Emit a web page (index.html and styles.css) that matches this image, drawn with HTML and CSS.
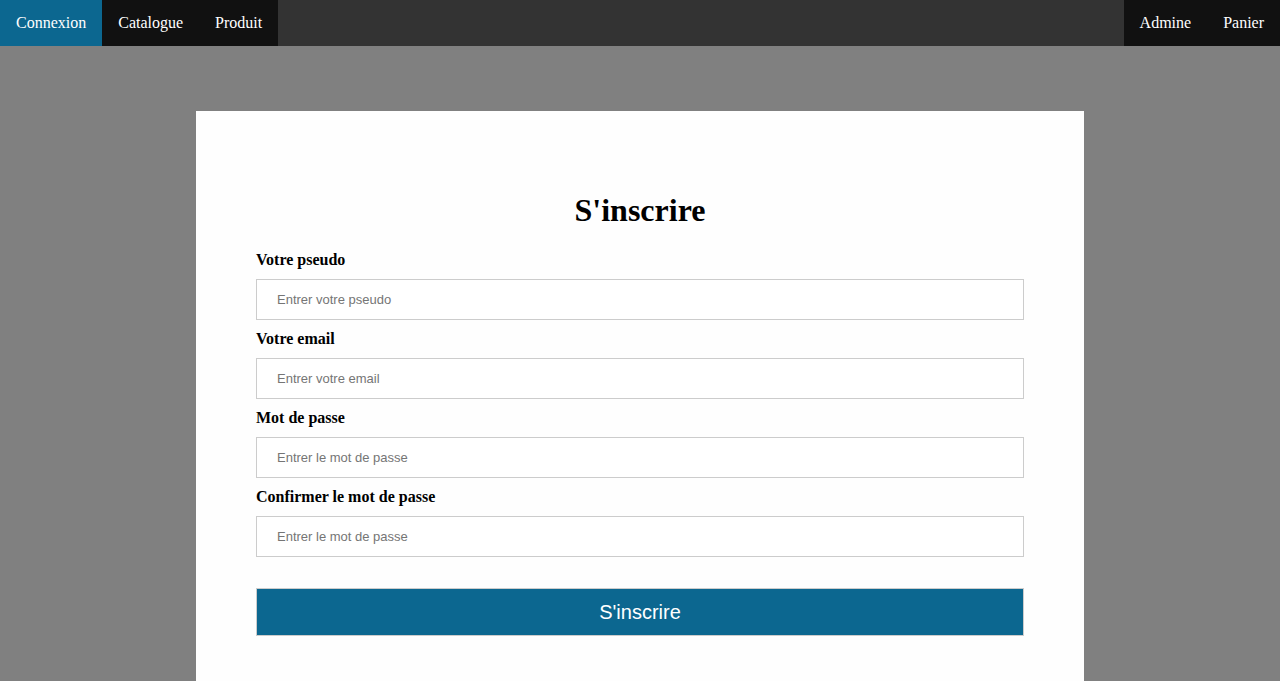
FILE: index.html
```html
<!DOCTYPE html>
<html lang="fr">
<head>
<meta charset="utf-8">
<title>S'inscrire</title>
<link rel="stylesheet" href="styles.css">
</head>
<body>
<nav class="topnav">
  <div class="nav-left">
    <a class="nav-link active" href="#">Connexion</a>
    <a class="nav-link" href="#">Catalogue</a>
    <a class="nav-link" href="#">Produit</a>
  </div>
  <div class="nav-right">
    <a class="nav-link" href="#">Admine</a>
    <a class="nav-link" href="#">Panier</a>
  </div>
</nav>
<main class="page">
  <form class="card">
    <h1 class="title">S'inscrire</h1>
    <label class="field-label" for="pseudo">Votre pseudo</label>
    <input class="field-input" id="pseudo" type="text" placeholder="Entrer votre pseudo">
    <label class="field-label" for="email">Votre email</label>
    <input class="field-input" id="email" type="text" placeholder="Entrer votre email">
    <label class="field-label" for="pw">Mot de passe</label>
    <input class="field-input" id="pw" type="password" placeholder="Entrer le mot de passe">
    <label class="field-label" for="pw2">Confirmer le mot de passe</label>
    <input class="field-input" id="pw2" type="password" placeholder="Entrer le mot de passe">
    <button class="submit" type="button">S'inscrire</button>
  </form>
</main>
</body>
</html>
```
FILE: styles.css
```css
html, body {
  margin: 0;
  padding: 0;
}
body {
  background: #808080;
  font-family: "Liberation Serif", "Times New Roman", serif;
  height: 681px;
  overflow: hidden;
}
.topnav {
  display: flex;
  justify-content: space-between;
  background: #333333;
  height: 46px;
}
.nav-left, .nav-right {
  display: flex;
}
.nav-link {
  display: block;
  background: #111111;
  color: #ffffff;
  text-decoration: none;
  font-size: 16px;
  line-height: 18px;
  padding: 14px 16px;
}
.nav-link.active {
  background: #0c6790;
}
.page {
  display: flex;
  justify-content: center;
  padding-top: 65px;
}
.card {
  box-sizing: border-box;
  width: 888px;
  background: #fefefe;
  padding: 60px 60px 60px;
  display: flex;
  flex-direction: column;
}
.title {
  text-align: center;
  font-size: 32px;
  line-height: 37px;
  margin: 21px 0;
}
.field-label {
  font-weight: bold;
  font-size: 16px;
  line-height: 18px;
  padding-top: 1px;
}
.field-input {
  box-sizing: border-box;
  height: 41px;
  margin: 10px 0 9px;
  padding: 0 20px;
  border: 1px solid #cccccc;
  font-family: "Liberation Sans", Arial, sans-serif;
  font-size: 13px;
  outline: none;
}
.field-input::placeholder {
  color: #757575;
}
.submit {
  margin-top: 22px;
  height: 48px;
  background: #0c6790;
  color: #ffffff;
  border: 1px solid #cccccc;
  font-family: "Liberation Sans", Arial, sans-serif;
  font-size: 20px;
  cursor: pointer;
}
```
